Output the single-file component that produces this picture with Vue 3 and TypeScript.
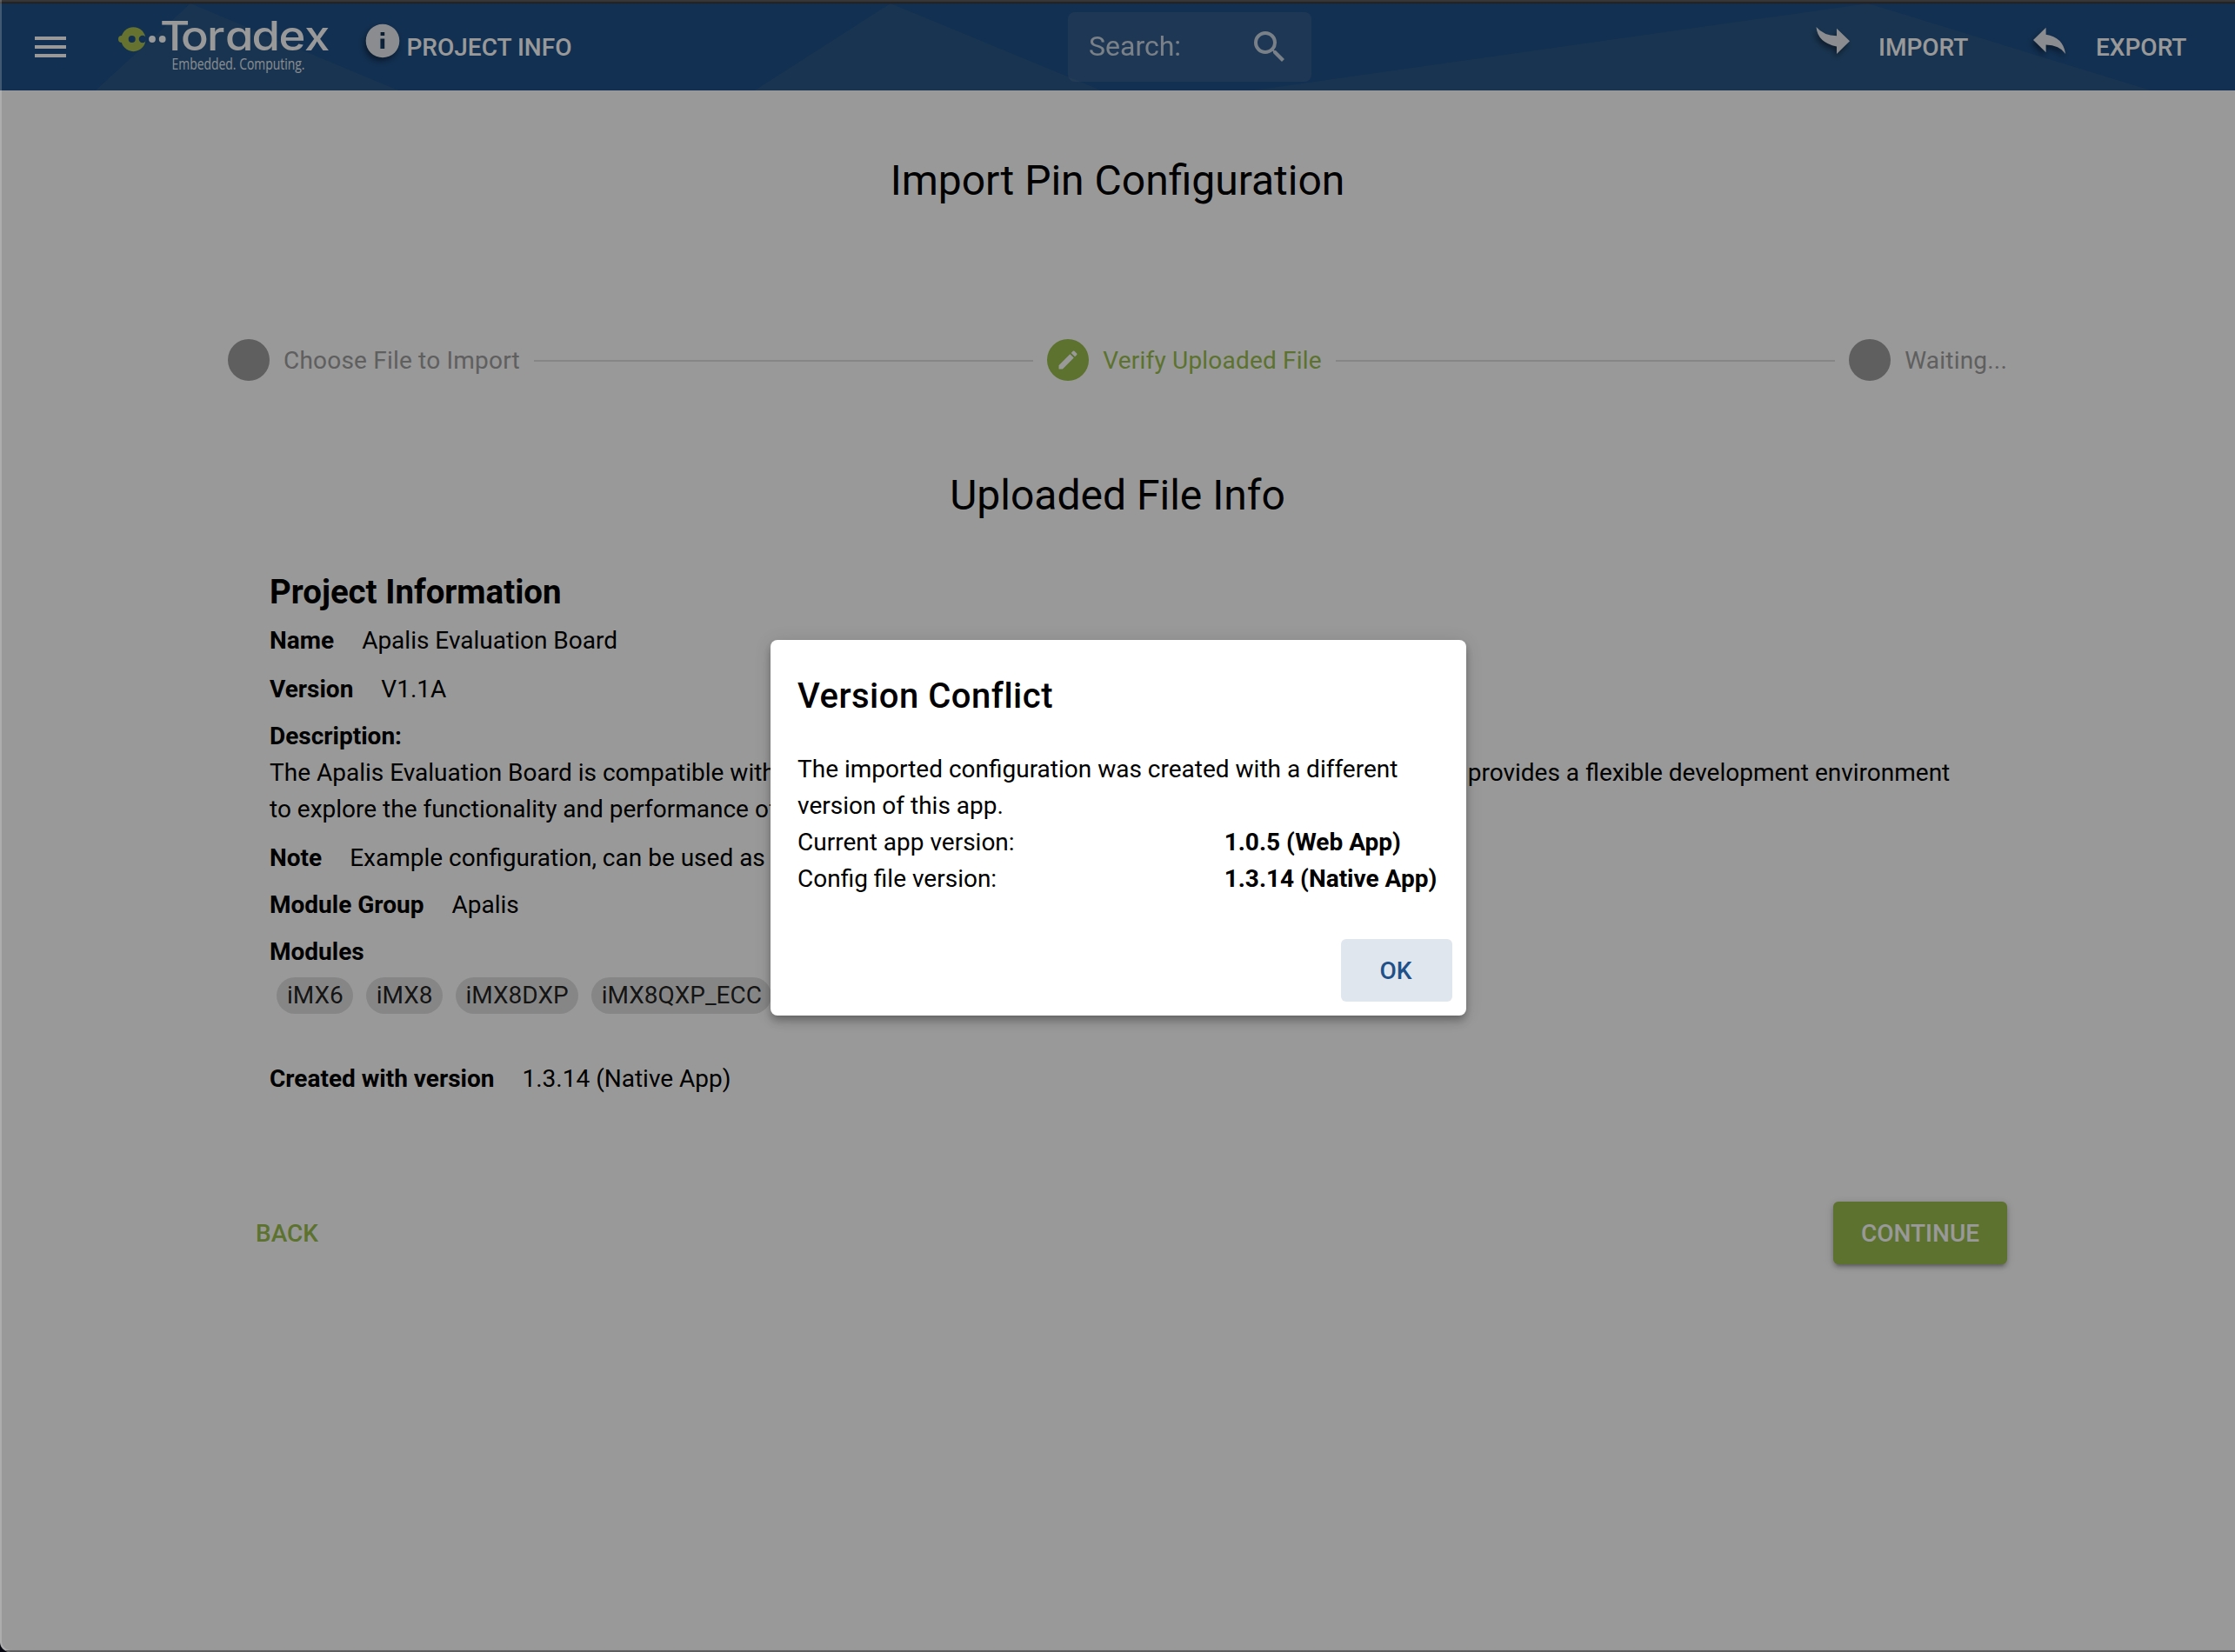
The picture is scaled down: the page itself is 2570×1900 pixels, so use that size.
<script setup lang="ts">
interface Field {
  label: string
  value: string
}

const headFields: Field[] = [
  { label: 'Name', value: 'Apalis Evaluation Board' },
  { label: 'Version', value: 'V1.1A' },
]
const modules: string[] = ['iMX6', 'iMX8', 'iMX8DXP', 'iMX8QXP_ECC']
const versions: Field[] = [
  { label: 'Current app version:', value: '1.0.5 (Web App)' },
  { label: 'Config file version:', value: '1.3.14 (Native App)' },
]
</script>

<template>
  <div class="window">
    <header class="bar">
      <svg class="facets" viewBox="0 0 2570 100" width="2570" height="100">
        <path d="M110 100L219 0L458 100ZM868 100L1024 0L1266 100ZM1441 100L2148 0L2473 100Z" fill="#2a5886" />
      </svg>
      <svg class="menu" width="36" height="24" viewBox="0 0 36 24" fill="#fff">
        <path d="M0 0h36v4H0zM0 10h36v4H0zM0 20h36v4H0z" />
      </svg>
      <svg class="logo" width="246" height="72" viewBox="134 16 246 72">
        <mask id="eyes">
          <rect x="130" y="25" width="45" height="40" fill="#fff" />
          <circle cx="151.7" cy="45" r="4" fill="#000" />
          <circle cx="163.9" cy="45" r="4.2" fill="#000" />
        </mask>
        <g fill="#a8bf50" mask="url(#eyes)">
          <circle cx="153.400" cy="45.200" r="14" />
          <rect x="136" y="41" width="10" height="8" rx="4" />
        </g>
        <circle cx="175" cy="45" r="3.900" fill="#fff" />
        <circle cx="186.700" cy="45" r="3.900" fill="#fff" />
        <text class="brand" transform="scale(1.12 1)" y="57.700" x="164.300 185.700 212.500 231.300 258.500 286.200 312.500">Toradex</text>
        <text class="tagline" x="197.500" y="80.300" textLength="153" lengthAdjust="spacingAndGlyphs">Embedded. Computing.</text>
      </svg>
      <svg class="glyph info" width="40" height="40" viewBox="0 0 40 40">
        <path fill-rule="evenodd" d="M20 .7a19.300 19.300 0 1 0 0 38.600a19.300 19.300 0 1 0 0-38.600zM17.600 10h4.600v4h-4.600zM17.400 17.500h4.800v11.500h-4.800z" />
      </svg>
      <span class="action project">PROJECT INFO</span>
      <div class="search">
        <span>Search:</span>
        <svg width="48" height="48" viewBox="0 0 24 24" fill="#fff">
          <path d="M15.500 14h-.79l-.28-.27A6.471 6.471 0 0 0 16 9.500 6.500 6.500 0 1 0 9.500 16c1.610 0 3.090-.59 4.230-1.570l.27.28v.79l5 4.990L20.490 19l-4.990-5zm-6 0C7.010 14 5 11.990 5 9.500S7.010 5 9.500 5 14 7.010 14 9.500 11.990 14 9.500 14z" />
        </svg>
      </div>
      <svg class="glyph import" width="40" height="32" viewBox="0 0 40 32">
        <path d="M.5 0Q9 10 24 10.200V1.700L39 16.200L24 31V22.500Q2 18 .5 0z" />
      </svg>
      <span class="action import-text">IMPORT</span>
      <svg class="glyph export" width="40" height="32" viewBox="0 0 40 32">
        <path d="M0 15L14.600.7V8.800Q34 11.500 37.200 31Q30 20.500 14.600 20.500V29.300z" />
      </svg>
      <span class="action export-text">EXPORT</span>
    </header>

    <main>
      <h1>Import Pin Configuration</h1>

      <div class="stepper">
        <span class="dot"></span>
        <span class="step">Choose File to Import</span>
        <i class="rule"></i>
        <span class="dot active">
          <svg width="28" height="28" viewBox="0 0 24 24" fill="#fff">
            <path d="M3 17.250V21h3.750L17.810 9.940l-3.750-3.750L3 17.250zM20.710 7.040a.996.996 0 0 0 0-1.410l-2.340-2.340a.996.996 0 0 0-1.410 0l-1.830 1.830 3.750 3.750 1.830-1.830z" />
          </svg>
        </span>
        <span class="step active">Verify Uploaded File</span>
        <i class="rule"></i>
        <span class="dot"></span>
        <span class="step">Waiting...</span>
      </div>

      <h2>Uploaded File Info</h2>

      <section class="details">
        <h3>Project Information</h3>
        <div v-for="f in headFields" :key="f.label" class="field" :class="f.label.toLowerCase()">
          <b>{{ f.label }}</b><span>{{ f.value }}</span>
        </div>
        <b class="line">Description:</b>
        <p>
          The Apalis Evaluation Board is compatible with
          <span class="middle">all the modules of the Apalis Computer on Module family. It</span>
          provides a flexible development environment<br />
          to explore the functionality and performance of the Apalis modules.
        </p>
        <div class="field"><b>Note</b><span>Example configuration, can be used as a template</span></div>
        <div class="field"><b>Module Group</b><span>Apalis</span></div>
        <b class="line">Modules</b>
        <div class="chips">
          <span v-for="m in modules" :key="m" class="chip">{{ m }}</span>
        </div>
        <div class="field"><b>Created with version</b><span>1.3.14 (Native App)</span></div>
      </section>

      <div class="nav">
        <button class="btn back">BACK</button>
        <button class="btn continue">CONTINUE</button>
      </div>
    </main>

    <div class="backdrop">
      <div class="dialog">
        <h4>Version Conflict</h4>
        <div class="message">
          The imported configuration was created with a different version of this app.
          <div v-for="v in versions" :key="v.label" class="version-row">
            <span>{{ v.label }}</span><b>{{ v.value }}</b>
          </div>
        </div>
        <div class="actions"><button class="btn ok">OK</button></div>
      </div>
    </div>
    <div class="edge"></div>
  </div>
</template>

<style>
body {
  margin: 0;
  background: #05060f;
}
</style>

<style scoped>
.window {
  position: relative;
  box-sizing: border-box;
  width: 2570px;
  height: 1900px;
  padding-top: 4px;
  overflow: hidden;
  border-bottom-left-radius: 12px;
  background: #fff;
  color: #000;
  font: 400 28px/42px Roboto, "Liberation Sans", sans-serif;
}
h1, h2, h3, h4, p { margin: 0; }
b { font-weight: 700; }
svg { display: block; flex: none; }

.bar {
  position: relative;
  display: flex;
  align-items: center;
  height: 100px;
  background: #1f5088;
  color: #fff;
}
.bar > * { position: relative; }
.bar > .facets { position: absolute; left: 0; top: 0; }
.menu { margin-left: 39.500px; }
.logo { margin-left: 58.500px; margin-bottom: 4px; overflow: visible; }
.brand {
  fill: #fff;
  font-family: Inter, sans-serif;
  font-size: 47px;
  font-weight: 450;
  font-feature-settings: "cv11";
}
.tagline {
  fill: #e4eaf1;
  font-family: "Open Sans", sans-serif;
  font-size: 17.300px;
  font-weight: 500;
}
.glyph { fill: #e6eaee; overflow: visible; filter: drop-shadow(-2px 4px 3px rgba(0, 0, 0, .45)); }
.info { margin-left: 39.500px; margin-bottom: 14px; }
.action { padding-top: 2px; font-weight: 500; white-space: nowrap; }
.project { width: 190px; margin-left: 8px; }
.search {
  display: flex;
  align-items: center;
  justify-content: space-between;
  box-sizing: border-box;
  width: 280px;
  height: 80px;
  margin-left: 570.500px;
  padding: 0 24px;
  border-radius: 8px;
  background: rgba(160, 170, 180, .15);
  font-size: 32px;
}
.search span, .search svg { opacity: .74; }
.search span { padding-bottom: 2px; color: #fff; }
.import { margin-left: 580px; margin-bottom: 14px; }
.import-text { width: 105px; margin-left: 32px; }
.export { margin-left: 73px; margin-bottom: 14px; }
.export-text { margin-left: 32px; }

main { padding: 72px 262px 0; }
h1, h2 {
  font-size: 48px;
  font-weight: 400;
  line-height: 64px;
  text-align: center;
}
.stepper {
  display: flex;
  align-items: center;
  height: 48px;
  margin: 150px 0 100px;
}
.dot {
  display: flex;
  align-items: center;
  justify-content: center;
  flex: none;
  width: 48px;
  height: 48px;
  border-radius: 50%;
  background: #9e9e9e;
}
.dot.active { background: #99bf4d; }
.step {
  margin: 0 16px;
  padding-top: 2px;
  color: #9e9e9e;
  letter-spacing: .2px;
  white-space: nowrap;
}
.step:last-child { margin-right: 0; }
.step.active { color: #99bf4d; }
.rule {
  flex: 1;
  height: 2px;
  margin: 2px 16px 0 0;
  background: rgba(0, 0, 0, .12);
}

.details { padding: 47px 48px 0; }
h3 {
  margin-bottom: 3px;
  font-size: 38.400px;
  font-weight: 700;
  line-height: 64px;
}
.field { display: flex; gap: 32px; height: 54px; white-space: nowrap; }
.field.name { height: 56px; }
.line { display: block; }
.details p { height: 98px; white-space: nowrap; }
.middle { display: inline-block; width: 782px; }
.chips { display: flex; gap: 15px; margin: 8px 0 54px 8px; }
.chip {
  padding: 0 11px 0 12px;
  border-radius: 21px;
  background: #e0e0e0;
  color: rgba(0, 0, 0, .87);
}

.nav { display: flex; justify-content: space-between; margin-top: 108px; }
.btn {
  height: 72px;
  padding: 2px 32px 0;
  border: 0;
  border-radius: 6px;
  background: transparent;
  font: 500 28px/48px Roboto, "Liberation Sans", sans-serif;
}
.back { color: #99bf4d; }
.continue {
  width: 200px;
  background: #99bf4d;
  color: #fff;
  box-shadow: 0 2px 10px rgba(0, 0, 0, .2), 0 4px 4px rgba(0, 0, 0, .14), 0 6px 2px -4px rgba(0, 0, 0, .12);
}

.backdrop {
  position: absolute;
  inset: 0;
  display: flex;
  align-items: flex-start;
  justify-content: center;
  padding-top: 736px;
  background: rgba(0, 0, 0, .4);
}
.dialog {
  width: 800px;
  height: 432px;
  margin-left: 2px;
  border-radius: 8px;
  background: #fff;
  box-shadow: 0 4px 8px -2px rgba(0, 0, 0, .2), 0 8px 10px rgba(0, 0, 0, .14), 0 2px 20px rgba(0, 0, 0, .12);
}
h4 {
  padding: 33px 31px 31px;
  font-size: 40px;
  font-weight: 500;
  line-height: 64px;
  letter-spacing: .5px;
}
.message { padding: 0 33px 32px 31px; }
.version-row { display: flex; white-space: nowrap; }
.version-row span { width: 66.6667%; }
.actions { display: flex; justify-content: flex-end; padding: 16px; }
.ok { width: 128px; padding-right: 34px; background: #dfe6ee; color: #1f5088; }

.edge {
  position: absolute;
  inset: 0;
  border-left: 2px solid rgba(255, 255, 255, .2);
  border-bottom: 2px solid rgba(255, 255, 255, .2);
  border-bottom-left-radius: 12px;
  background: linear-gradient(#343436 0 2px, #222224 2px 4px, transparent 4px);
}
</style>
